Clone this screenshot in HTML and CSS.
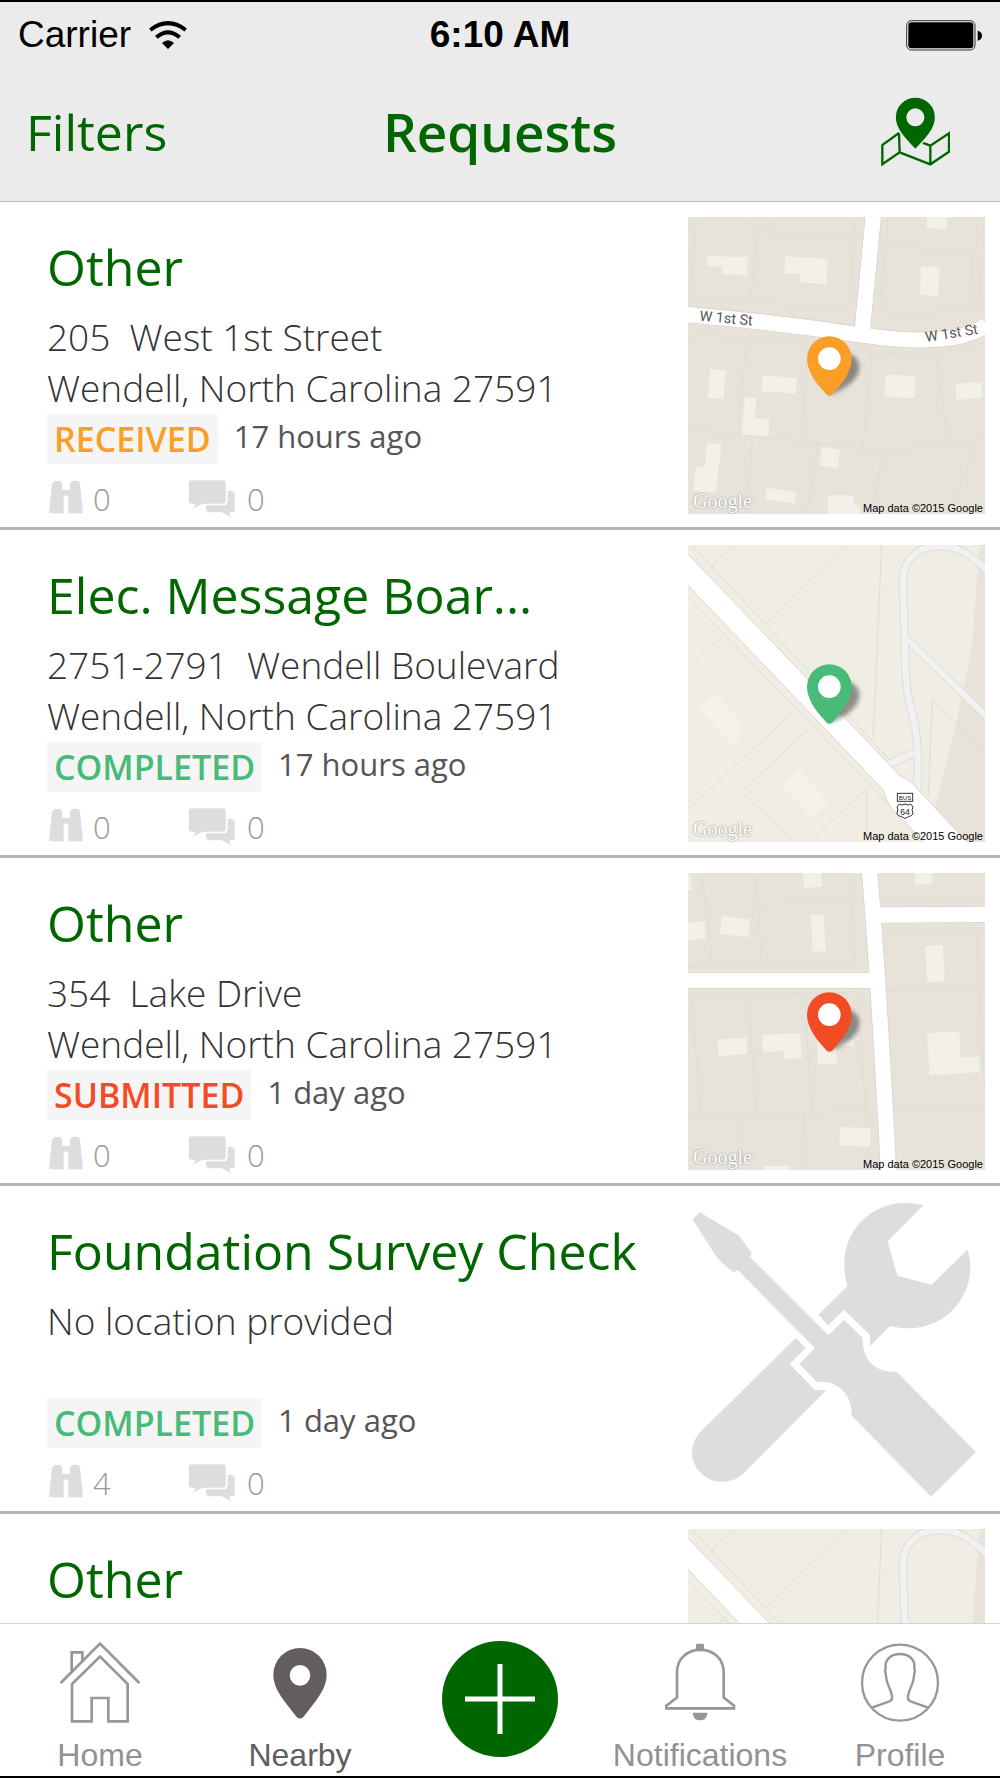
FILE: index.html
```html
<!DOCTYPE html>
<html lang="en">
<head>
  <meta charset="UTF-8" />
  <meta name="viewport" content="width=device-width, initial-scale=1.0" />
  <title>Requests</title>
  <link rel="icon" href="data:,">
  <link rel="stylesheet" href="styles.css">
</head>
<body>
  <!-- Shared icons and maps -->
  <svg class="sprite" aria-hidden="true">
    <symbol id="icon-watch" viewBox="22 30 108 120">
      <path d="M42 36H63V42H67V62H91V42H95V36H118V42H121L130 133H86V80H72V133H28L37 42H42Z" />
    </symbol>
    <symbol id="icon-comments" viewBox="3 0 144 120">
      <path d="M12 4h92q9 0 9 9v52q0 9-10 9H43L18 88l5-14h-11q-9 0-9-9V13q0-9 9-9z" />
      <path d="M119 36h12q9 0 9 9v47q0 8-9 8h-7l4 15-26-15H64q-10 0-10-9v-9l2-3h52q11-1 11-12z" />
    </symbol>
    <symbol id="map-boulevard" viewBox="54 45 891 891">
      <path fill="#efede4" d="M54 45h891v891H54z" />
      <path fill="#e7e3db" d="M930 45h15v891H770l85-340 50-240z" />
      <g fill="none" stroke="#e0dcd3" stroke-width="3">
        <path d="M66 45L660 690M190 45L125 110M527 45L290 280M635 45L610 618M54 200L720 890M160 316L54 411M370 546L54 838M415 598L215 785 370 936M590 775L430 925M590 775V900M787 508L775 795M787 508L945 665" />
      </g>
      <path fill="#f4f2eb" d="M136 488l81 93-14 14 11 24-26 26L86 534zM386 714l87 105-48 42-88-94z" />
      <g fill="none" stroke="#dedcd8" stroke-width="25">
        <path d="M743 800V670C743 560 706 530 706 400L699 160C699 20 850 40 890 72Q925 92 950 120M708 325L950 560M740 665L650 705" />
      </g>
      <g fill="none" stroke="#f2f1f1" stroke-width="19">
        <path d="M743 800V670C743 560 706 530 706 400L699 160C699 20 850 40 890 72Q925 92 950 120M708 325L950 560M740 665L650 705" />
      </g>
      <path fill="#fff" stroke="#cfc6ba" stroke-width="2" d="M50 68L645 690 690 738Q725 752 745 780L895 940H765L665 835Q650 815 640 780L600 738 50 162z" />
    </symbol>
    <symbol id="map-pin" viewBox="0 0 891 891">
      <path class="pin-shadow" d="M424 535L480 410Q522 420 512 465Q498 505 424 535z" />
      <path fill="currentColor" d="M424 358a67 67 0 0 1 67 67c0 32-20 62-37 83l-22 25q-8 6-16 0l-22-25c-17-21-37-51-37-83a67 67 0 0 1 67-67z" />
      <circle cx="424" cy="425" r="34" fill="#fff" />
    </symbol>
  </svg>

  <header class="header">
    <div class="status-bar">
      <div class="carrier">
        <span>Carrier</span>
        <svg class="wifi" viewBox="0 0 114 84" aria-hidden="true">
          <path d="M57 84L39 66Q57 50 75 66z" />
          <path fill="none" stroke="#000" stroke-width="12" d="M22 49Q57 19 92 49M4 27Q57-14 110 27" />
        </svg>
      </div>
      <span class="clock">6:10 AM</span>
      <svg class="battery" viewBox="0 0 228 93" aria-hidden="true">
        <rect x="2" y="2" width="205" height="88" rx="14" fill="none" stroke="#333" stroke-width="3" />
        <rect x="7" y="7" width="195" height="78" rx="9" />
        <path d="M215 32q13 3 13 15t-13 15z" />
      </svg>
    </div>
    <div class="nav-bar">
      <button type="button" class="filters">Filters</button>
      <h1>Requests</h1>
      <button type="button" class="map-button" aria-label="Show map">
        <svg viewBox="0 0 207 210" aria-hidden="true">
          <path fill="none" stroke="#006700" stroke-width="7" d="M54 108L4 144v58l52-36 92 36 56-38v-55l-56 37-26-10M54 108l2 58M148 146v56" />
          <path stroke="#ebebeb" stroke-width="5" fill="#006700" d="M103 0a61 61 0 0 1 61 61c0 42-43 77-61 98C85 138 42 103 42 61A61 61 0 0 1 103 0z" />
          <circle cx="103" cy="61" r="27" fill="#ebebeb" />
        </svg>
      </button>
    </div>
  </header>

  <!-- Request list -->
  <main class="requests">
    <article class="request">
      <div class="info">
        <h2>Other</h2>
        <p class="address">205&nbsp; West 1st Street<br>Wendell, North Carolina 27591</p>
        <p class="state"><span class="badge received">RECEIVED</span><span class="time">17 hours ago</span></p>
        <div class="stats">
          <span class="stat"><svg class="watch"><use href="#icon-watch" /></svg>0</span>
          <span class="stat"><svg class="comments"><use href="#icon-comments" /></svg>0</span>
        </div>
      </div>
      <figure class="map received">
        <svg viewBox="54 52 891 891">
          <path fill="#e7e3db" d="M54 52h891v891H54z" />
          <g fill="none" stroke="#dedad1" stroke-width="2">
            <path d="M80 52L60 290 240 306 515 328Q538 318 540 300L557 52M215 52L262 93 547 122M318 52L302 96M262 93L242 306M655 52L632 300 665 348 945 325M652 132L908 167 945 70M908 167L900 330M936 160L925 330M54 418L80 403 400 430 605 460 800 464 945 428M230 422L203 706M413 440L395 724M605 460L578 746M796 464L835 732M54 690L400 725 580 748 640 756 945 717M248 715L225 943M444 735L410 943M640 756L605 943M923 722L840 943" />
          </g>
          <g fill="#f2f0e9">
            <path d="M111 170l122 2-2 55-76-4v-22l-45-4zM346 170l128 8-5 75-79-5v-24l-47-4zM752 200l57 2-5 87-54-4zM771 52h62l-3 38-60-5zM120 508l47 4-6 86-48-4zM278 527l103 8-4 47-102-8zM646 525l90 4-2 66-91-4zM857 552l78-4 2 46-78 7zM224 592l34 3-3 60 43 4-3 51-79-5zM110 731l44 3-16 147-68-8 8-71 26 2zM456 741l55 10-8 56-54-10zM290 864l89 13-4 35-90-14zM473 887h77v30h20v26h-97z" />
          </g>
          <path fill="none" stroke="#d8d0c5" stroke-width="50" d="M611 40L577 390M40 344Q300 365 575 406T950 376" />
          <path fill="none" stroke="#fff" stroke-width="46" d="M611 40L577 390M40 344Q300 365 575 406T950 376" />
          <g class="street">
            <text x="88" y="363" transform="rotate(5 88 363)">W 1st St</text>
            <text x="768" y="427" transform="rotate(-9 768 427)">W 1st St</text>
          </g>
        </svg>
        <svg class="pin"><use href="#map-pin" /></svg>
        <figcaption><span class="logo">Google</span><span>Map data ©2015 Google</span></figcaption>
      </figure>
    </article>

    <article class="request">
      <div class="info">
        <h2>Elec. Message Boar...</h2>
        <p class="address">2751-2791&nbsp; Wendell Boulevard<br>Wendell, North Carolina 27591</p>
        <p class="state"><span class="badge completed">COMPLETED</span><span class="time">17 hours ago</span></p>
        <div class="stats">
          <span class="stat"><svg class="watch"><use href="#icon-watch" /></svg>0</span>
          <span class="stat"><svg class="comments"><use href="#icon-comments" /></svg>0</span>
        </div>
      </div>
      <figure class="map completed">
        <svg viewBox="54 45 891 891">
          <use href="#map-boulevard" x="54" y="45" width="891" height="891" />
          <rect x="682" y="790" width="46" height="24" fill="#fff" stroke="#333" stroke-width="3" />
          <path fill="#fff" stroke="#333" stroke-width="3" d="M688 822q8 6 17 0 9 6 17 0l7 9q-6 9 0 18c0 10-17 10-24 17-7-7-24-7-24-17q6-9 0-18z" />
          <text class="shield-bus" x="705" y="809">BUS</text>
          <text class="shield" x="705" y="854">64</text>
        </svg>
        <svg class="pin"><use href="#map-pin" /></svg>
        <figcaption><span class="logo">Google</span><span>Map data ©2015 Google</span></figcaption>
      </figure>
    </article>

    <article class="request">
      <div class="info">
        <h2>Other</h2>
        <p class="address">354&nbsp; Lake Drive<br>Wendell, North Carolina 27591</p>
        <p class="state"><span class="badge submitted">SUBMITTED</span><span class="time">1 day ago</span></p>
        <div class="stats">
          <span class="stat"><svg class="watch"><use href="#icon-watch" /></svg>0</span>
          <span class="stat"><svg class="comments"><use href="#icon-comments" /></svg>0</span>
        </div>
      </div>
      <figure class="map submitted">
        <svg viewBox="54 41 891 891">
          <path fill="#e7e3db" d="M54 41h891v891H54z" />
          <g fill="none" stroke="#dedad1" stroke-width="2">
            <path d="M54 322L556 313 538 41M95 41L128 320M255 41L277 318M270 135L540 130M630 128L945 121M640 212L945 205M918 210L945 700M652 394L925 391M683 752L945 747M54 410L563 398 600 932M66 410L92 768M235 408L260 763M403 402L427 756M54 769L592 755M214 765L220 932M400 760L410 932" />
          </g>
          <g fill="#f2f0e9">
            <path d="M54 45l8 2 4 44-12 2zM54 191l49-6 5 52-54 7zM155 170l84 10-5 54-84-10zM398 41h56l2 41-54 4zM422 167l38-2 7 111-39 1zM733 41h52l5 30-54 6zM766 260l52-4 6 109-52 4zM143 541l86-6 3 49-85 6zM277 527l113-6 5 76-53 2-1-24-62 4zM441 540h110v20h-50l-1 54-58-1zM772 522l96-6 4 78 55-2 4 46-153 10zM510 803l91 4-1 54-91-2zM280 920h80v12h-80z" />
          </g>
          <path fill="none" stroke="#d8d0c5" stroke-width="50" d="M598 30Q622 300 656 940M40 363H615M625 167L950 165" />
          <path fill="none" stroke="#fff" stroke-width="46" d="M598 30Q622 300 656 940M40 363H615M625 167L950 165" />
        </svg>
        <svg class="pin"><use href="#map-pin" /></svg>
        <figcaption><span class="logo">Google</span><span>Map data ©2015 Google</span></figcaption>
      </figure>
    </article>

    <article class="request">
      <div class="info">
        <h2>Foundation Survey Check</h2>
        <p class="address">No location provided</p>
        <p class="state"><span class="badge completed">COMPLETED</span><span class="time">1 day ago</span></p>
        <div class="stats">
          <span class="stat"><svg class="watch"><use href="#icon-watch" /></svg>4</span>
          <span class="stat"><svg class="comments"><use href="#icon-comments" /></svg>0</span>
        </div>
      </div>
      <figure class="map">
        <svg viewBox="54 63 891 891" fill="#ddd">
          <path d="M89 97L68 119l74 115q23 26 49 43l12-7 231 234-46 48 53 54c59-6 107 34 104 101l238 243 135-134-238-241c-55 5-105-30-102-101l-56-54-47 46-235-235 6-11-33-45q-5-7-13-12z" />
          <path d="M760 76C640 40 520 130 523 255q1 40 10 63l-88 86 30 32 47-47 78 77v33l60-61c135 35 245-65 241-183q-1-27-9-46L785 314l-103-27-29-103z" />
          <path d="M377 474l30 30-48 48 75 77 35 2-247 247c-32 35-97 39-132-2-35-36-30-91 5-124z" />
        </svg>
      </figure>
    </article>

    <article class="request">
      <div class="info">
        <h2>Other</h2>
      </div>
      <figure class="map">
        <svg><use href="#map-boulevard" /></svg>
      </figure>
    </article>
  </main>

  <!-- Tab bar -->
  <nav class="tab-bar">
    <a href="#home" class="tab">
      <svg viewBox="173 123 252 252" fill="none" stroke="#979797" stroke-width="8">
        <path d="M181 249L299 131l118 118M214 213v-56h32v30M215 364V252l84-82 83 82v112h-58v-70h-50v70z" />
      </svg>
      Home
    </a>
    <a href="#nearby" class="tab active">
      <svg viewBox="771 123 252 252">
        <path fill="#625e5d" fill-rule="evenodd" d="M897 144a80 80 0 0 1 80 80c0 33-20 60-32 78l-38 49q-10 9-20 0l-38-49c-12-18-32-45-32-78a80 80 0 0 1 80-80zm0 51a31 31 0 1 0 0 62 31 31 0 0 0 0-62z" />
      </svg>
      Nearby
    </a>
    <button type="button" class="add" aria-label="New request">
      <svg viewBox="0 0 116 116" stroke="#fff" stroke-width="5">
        <path d="M23 58h70M58 23v70" />
      </svg>
    </button>
    <a href="#notifications" class="tab">
      <svg viewBox="476 123 252 252" fill="none" stroke="#979797" stroke-width="8">
        <path d="M501 325v-8l32-24v-76c0-90 140-90 140 0v76l31 24v8z" />
        <path fill="#979797" stroke="none" d="M593 131h18q3 0 3 6v14h-24v-14q0-6 3-6zM580 338h45q-3 23-23 23t-22-23z" />
      </svg>
      Notifications
    </a>
    <a href="#profile" class="tab">
      <svg viewBox="1071 123 252 252" fill="none" stroke="#979797" stroke-width="7">
        <circle cx="1197" cy="248" r="114" />
        <path d="M1115 322l48-17q12-4 10-16c-2-18-12-30-16-48l-3-21q-3-8 0-16c-7-56 93-56 86 0q3 8 0 16l-3 21c-4 18-14 30-16 48q-2 12 10 16l48 17" />
      </svg>
      Profile
    </a>
  </nav>
</body>
</html>
```

FILE: styles.css
```css
body {
  display: flex;
  flex-direction: column;
  height: 100vh;
  margin: 0;
  box-sizing: border-box;
  border-top: 2px solid #000;
  border-bottom: 2px solid #000;
  background-color: #fff;
  font-family: "Open Sans", sans-serif;
  color: #333;
}

h1, h2, p, figure {
  margin: 0;
}

button {
  padding: 0;
  border: none;
  background: none;
  font: inherit;
  cursor: pointer;
}

svg {
  display: block;
}

.sprite {
  position: absolute;
  width: 0;
  height: 0;
}

/* Header */
.header {
  flex: none;
  background-color: #ebebeb;
  border-bottom: 1px solid #b8b8b8;
}

.status-bar, .nav-bar {
  display: grid;
  grid-template-columns: 1fr auto 1fr;
  align-items: center;
}

.status-bar {
  padding: 13px 18px 0;
  font-family: "Liberation Sans", Arial, sans-serif;
  font-size: 37px;
  line-height: 40px;
  color: #000;
}

.carrier {
  display: flex;
  align-items: center;
  gap: 18px;
}

.clock {
  font-weight: bold;
}

.wifi {
  width: 38px;
  height: 28px;
}

.battery {
  width: 76px;
  height: 31px;
  justify-self: end;
}

.nav-bar {
  padding: 42px 26px 34px;
  font-size: 50px;
  line-height: 70px;
  color: #006700;
}

.nav-bar h1 {
  font-size: 53px;
  font-weight: 600;
}

.filters {
  justify-self: start;
  color: #006700;
}

.map-button {
  justify-self: end;
  margin-right: 24px;
}

.map-button svg {
  width: 69px;
  height: 70px;
}

/* Request list */
.requests {
  flex: 1;
  min-height: 0;
  overflow-y: auto;
  scrollbar-width: none;
}

.request {
  display: flex;
  justify-content: space-between;
  height: 325px;
  padding: 0 15px 0 47px;
  border-bottom: 3px solid #b5b5b5;
}

.info {
  padding-top: 35px;
  white-space: nowrap;
}

.info h2 {
  margin-bottom: 14px;
  font-size: 50px;
  font-weight: 400;
  line-height: 60px;
  color: #006700;
}

.address {
  min-height: 102px;
  margin-bottom: 1px;
  font-size: 37px;
  font-weight: 300;
  line-height: 51px;
}

.state {
  display: flex;
  align-items: flex-start;
  gap: 16px;
  margin-bottom: 15px;
}

.badge {
  padding: 0 7px;
  background-color: #f5f5f5;
  font-size: 34px;
  font-weight: 600;
  line-height: 50px;
}

.time {
  font-size: 31px;
  line-height: 44px;
  color: #555;
}

.received {
  color: #fb9e25;
}

.completed {
  color: #48bb78;
}

.submitted {
  color: #f24c24;
}

.stats {
  display: flex;
  font-size: 31px;
  font-weight: 300;
  line-height: 40px;
  color: #999;
}

.stat {
  display: flex;
  align-items: center;
  gap: 10px;
  width: 142px;
}

.stat svg {
  height: 40px;
  fill: #ddd;
}

.watch {
  width: 36px;
}

.comments {
  width: 48px;
}

/* Map thumbnails */
.map {
  position: relative;
  flex: none;
  width: 297px;
  height: 297px;
  margin-top: 15px;
}

.map svg {
  width: 100%;
  height: 100%;
}

.map .pin {
  position: absolute;
  inset: 0;
}

.pin-shadow {
  fill: #000;
  opacity: 0.4;
  filter: blur(6px);
}

.street {
  font-family: Roboto, sans-serif;
  font-size: 43px;
  fill: #555;
}

.shield, .shield-bus {
  font-family: "Liberation Sans", Arial, sans-serif;
  font-size: 26px;
  text-anchor: middle;
  fill: #222;
}

.shield-bus {
  font-size: 18px;
}

.map figcaption {
  position: absolute;
  inset: auto 2px 0 5px;
  display: flex;
  justify-content: space-between;
  align-items: flex-end;
  font-family: "Liberation Sans", Arial, sans-serif;
  font-size: 11px;
  line-height: 11px;
  color: #000;
}

.logo {
  font-family: "Liberation Serif", serif;
  font-size: 20px;
  line-height: 26px;
  color: #fff;
  text-shadow: 0 0 2px #777;
}

/* Tab bar */
.tab-bar {
  flex: none;
  display: grid;
  grid-template-columns: repeat(5, 1fr);
  justify-items: center;
  align-items: start;
  padding: 17px 0 3px;
  border-top: 1px solid #d4d4d4;
  background-color: #fff;
}

.tab {
  display: flex;
  flex-direction: column;
  align-items: center;
  gap: 12px;
  font-family: "Liberation Sans", Arial, sans-serif;
  font-size: 32px;
  line-height: 36px;
  color: #929292;
  text-decoration: none;
}

.tab svg {
  width: 84px;
  height: 84px;
}

.tab.active {
  color: #625e5d;
}

.add {
  width: 116px;
  height: 116px;
  border-radius: 50%;
  background-color: #006700;
}
```
